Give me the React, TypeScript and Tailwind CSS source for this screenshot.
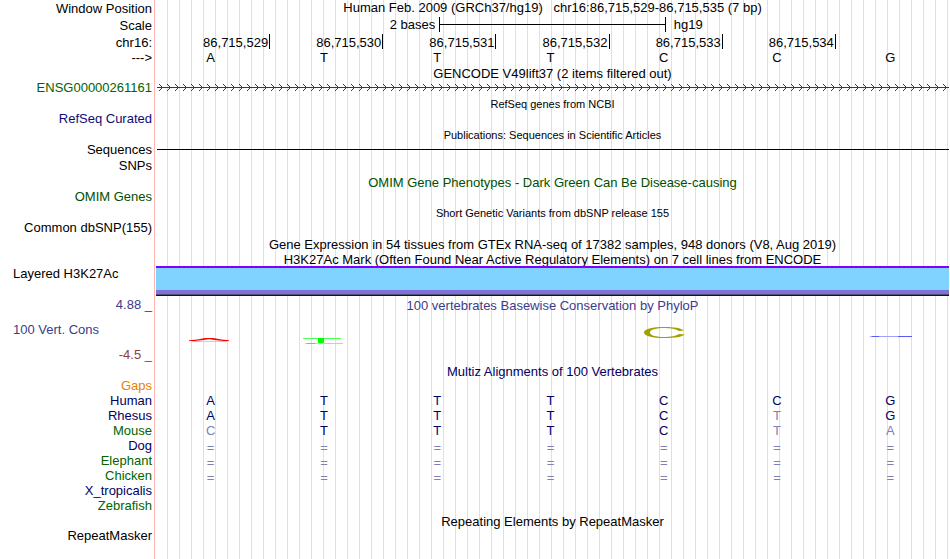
import type { ReactNode } from "react";
import clsx from "clsx";

const positions = [
  "86,715,529",
  "86,715,530",
  "86,715,531",
  "86,715,532",
  "86,715,533",
  "86,715,534",
];

const species = [
  { name: "Human", color: "text-[#000064]", bases: "ATTTCCG", faded: "" },
  { name: "Rhesus", color: "text-[#000064]", bases: "ATTTCTG", faded: "5" },
  { name: "Mouse", color: "text-[#006400]", bases: "CTTTCTA", faded: "056" },
  { name: "Dog", color: "text-[#000064]", bases: "=======", faded: "0123456" },
  { name: "Elephant", color: "text-[#006400]", bases: "=======", faded: "0123456" },
  { name: "Chicken", color: "text-[#006400]", bases: "=======", faded: "0123456" },
  { name: "X_tropicalis", color: "text-[#000064]", bases: "", faded: "" },
  { name: "Zebrafish", color: "text-[#006400]", bases: "", faded: "" },
];

type RowProps = {
  label?: ReactNode;
  labelClass?: string;
  className?: string;
  children?: ReactNode;
};

function Row({ label, labelClass, className = "h-[15px]", children }: RowProps) {
  return (
    <div className={clsx("flex pr-px", className)}>
      <div
        className={clsx(
          "flex w-[155px] shrink-0 items-start justify-end border-r border-[#ffb4b4] pr-0.5 whitespace-nowrap",
          labelClass
        )}
      >
        {label}
      </div>
      <div className="ml-px min-w-0 flex-1 bg-[repeating-linear-gradient(to_right,transparent_0px,transparent_11px,#dcdcff_11px,#dcdcff_12px)]">
        {children}
      </div>
    </div>
  );
}

function Title({ children, className }: { children: ReactNode; className?: string }) {
  return (
    <div
      className={clsx(
        "flex h-full items-center justify-center whitespace-pre",
        className
      )}
    >
      {children}
    </div>
  );
}

function Bases({ bases, faded = "", className }: { bases: string; faded?: string; className?: string }) {
  return (
    <div className={clsx("grid h-full grid-cols-7 items-center", className)}>
      {bases.split("").map((base, i) => (
        <span
          key={i}
          className={clsx(
            "pr-1 text-center",
            faded.includes(String(i)) && "text-[#8080b2]"
          )}
        >
          {base}
        </span>
      ))}
    </div>
  );
}

function GeneLine() {
  return (
    <svg className="h-full w-full" aria-hidden="true" shapeRendering="crispEdges">
      <defs>
        <pattern id="arrows" x="1" width="8" height="16" patternUnits="userSpaceOnUse">
          <path
            d="M2 4h1v1h-1zM3 5h1v1h-1zM4 6h1v1h-1zM4 8h1v1h-1zM3 9h1v1h-1zM2 10h1v1h-1z"
            fill="#006400"
          />
        </pattern>
      </defs>
      <rect x="1" width="100%" height="16" fill="url(#arrows)" />
      <rect x="1" y="7" width="100%" height="1" fill="#006400" />
    </svg>
  );
}

// One cell per base, the logo letters are flattened by their score
function ConservationLogo() {
  return (
    <div className="grid grid-cols-7 pt-[9px]">
      <svg width="113" height="30" aria-hidden="true">
        <path d="M36 19.5H71" stroke="#c8c850" strokeWidth="0.7" />
        <path d="M33 18.3Q42 18 49 16H57Q66 18 73 18.3V19Q62 19 54 17.200H52Q44 19 33 19Z" fill="#f00" />
      </svg>
      <svg width="113" height="30" aria-hidden="true">
        <path d="M34 16.5H72" stroke="#50ff50" />
        <path d="M36 21.5H74" stroke="#d2d296" />
        <path d="M38 21.5H46" stroke="#b4b432" />
        <path d="M49 16h6v5h-6z" fill="#0f0" />
      </svg>
      <span />
      <span />
      <svg width="113" height="30" aria-hidden="true">
        <path
          d="M75 8.5C72 6 65 5 56 5C43 5 35 7 35 10.5C35 14 43 16 56 16C66 16 73 15 76 12.5L70 12C67 14 62 15 56 15C47 15 41 13.5 41 10.5C41 7.5 47 6 56 6C62 6 67 7 70 9Z"
          fill="#a0a000"
        />
      </svg>
      <span />
      <svg width="113" height="30" aria-hidden="true">
        <path d="M34 14.5H76" stroke="#a0a0ff" />
        <path d="M36 14.5H43M62 14.5H76" stroke="#5a5af0" />
      </svg>
    </div>
  );
}

export default function App() {
  return (
    <main className="flex min-h-screen flex-col bg-white font-['Liberation_Sans',Arial,sans-serif] text-[13px] leading-[15px] text-black">
      <Row label="Window Position" className="h-[17px]" labelClass="pt-px">
        <Title className="pb-0.5">
          {"Human Feb. 2009 (GRCh37/hg19)   chr16:86,715,529-86,715,535 (7 bp)"}
        </Title>
      </Row>
      <Row label="Scale" className="h-[17px]" labelClass="pt-px">
        <div className="flex h-full items-start">
          <span className="w-5/14 pr-1 text-right">2 bases</span>
          <div className="flex h-[15px] w-2/7 items-center border-x border-black">
            <div className="h-px w-full bg-black" />
          </div>
          <span className="w-5/14 pl-2">hg19</span>
        </div>
      </Row>
      <Row label="chr16:" className="h-4" labelClass="pt-px">
        <div className="grid grid-cols-7 pl-px">
          {positions.map((position) => (
            <span
              key={position}
              className="h-[15px] border-r border-black pt-px pr-px text-right"
            >
              {position}
            </span>
          ))}
        </div>
      </Row>
      <Row label="--->">
        <Bases bases="ATTTCCG" />
      </Row>
      <Row>
        <Title className="pt-px">GENCODE V49lift37 (2 items filtered out)</Title>
      </Row>
      <Row
        label="ENSG00000261161"
        labelClass="text-[#006400]"
        className="h-4"
      >
        <GeneLine />
      </Row>
      <Row>
        <Title className="pt-0.5 text-[11px]">RefSeq genes from NCBI</Title>
      </Row>
      <Row label="RefSeq Curated" labelClass="text-[#0c0c78]" className="h-4" />
      <Row>
        <Title className="pt-0.5 text-[11px]">
          Publications: Sequences in Scientific Articles
        </Title>
      </Row>
      <Row label="Sequences" className="h-4">
        <div className="flex h-[15px] items-center pl-px">
          <div className="h-px w-full bg-black" />
        </div>
      </Row>
      <Row label="SNPs" className="h-4" />
      <Row>
        <Title className="pt-px text-[#005000]">
          OMIM Gene Phenotypes - Dark Green Can Be Disease-causing
        </Title>
      </Row>
      <Row label="OMIM Genes" labelClass="text-[#005000]" className="h-4" />
      <Row>
        <Title className="pt-0.5 text-[11px]">
          Short Genetic Variants from dbSNP release 155
        </Title>
      </Row>
      <Row label="Common dbSNP(155)" className="h-4" />
      <Row className="h-4">
        <Title>
          Gene Expression in 54 tissues from GTEx RNA-seq of 17382 samples, 948
          donors (V8, Aug 2019)
        </Title>
      </Row>
      <Row className="h-[14px]">
        <Title>
          H3K27Ac Mark (Often Found Near Active Regulatory Elements) on 7 cell
          lines from ENCODE
        </Title>
      </Row>
      <Row
        label="Layered H3K27Ac"
        labelClass="justify-start! pl-[13px]"
        className="h-[31px]"
      >
        <div className="h-0.5 bg-[#8000ff]" />
        <div className="h-[22px] bg-[#80d2ff]" />
        <div className="h-1 bg-[#8070d8]" />
        <div className="h-px bg-[#505078]" />
        <div className="h-px bg-[#101040]" />
      </Row>
      <Row
        className="h-[67px]"
        labelClass="flex-col items-stretch! justify-start!"
        label={
          <>
            <span className="text-right text-[#3c3c8c]">4.88 _</span>
            <span className="py-2.5 pl-[13px] text-[#3c3c8c]">100 Vert. Cons</span>
            <span className="text-right text-[#8c3c3c]">-4.5 _</span>
          </>
        }
      >
        <div className="pt-px text-center text-[#3c3c8c]">
          100 vertebrates Basewise Conservation by PhyloP
        </div>
        <ConservationLogo />
      </Row>
      <Row className="h-[14px]">
        <Title className="text-[#000064]">
          Multiz Alignments of 100 Vertebrates
        </Title>
      </Row>
      <Row label="Gaps" labelClass="text-[#e68200]" />
      {species.map(({ name, color, bases, faded }) => (
        <Row key={name} label={name} labelClass={color}>
          <Bases
            bases={bases}
            faded={faded}
            className={clsx("text-[#000064]", bases.startsWith("=") && "pt-0.5")}
          />
        </Row>
      ))}
      <Row>
        <Title className="pt-0.5">Repeating Elements by RepeatMasker</Title>
      </Row>
      <Row label="RepeatMasker" />
      <Row className="flex-1" />
    </main>
  );
}
